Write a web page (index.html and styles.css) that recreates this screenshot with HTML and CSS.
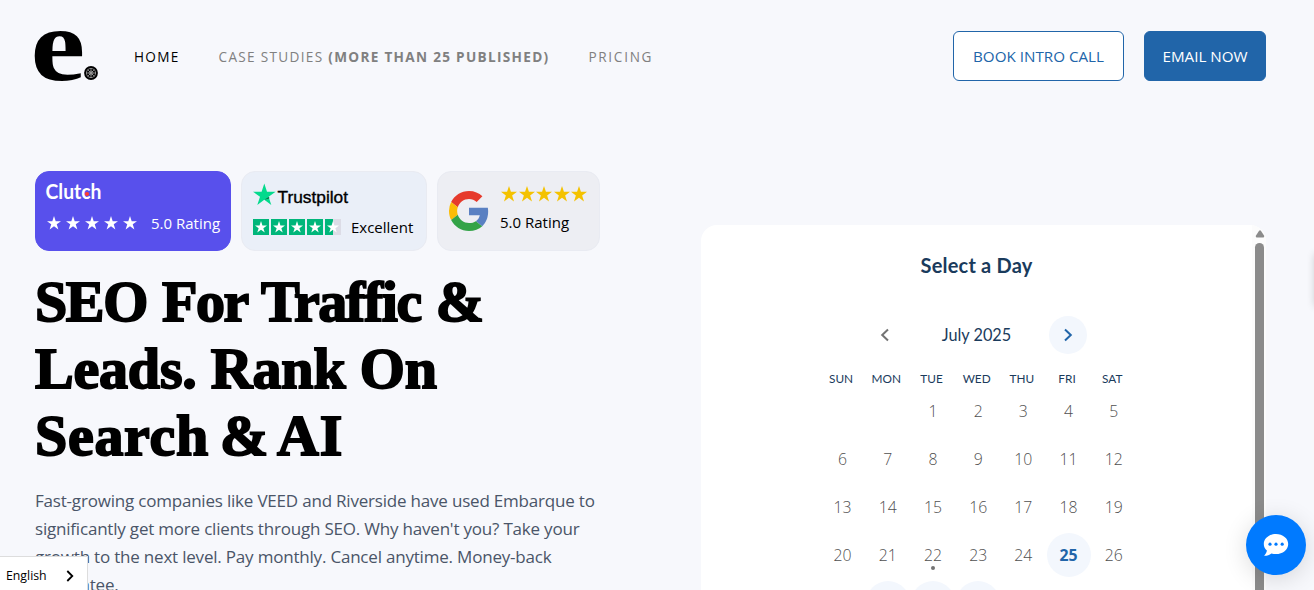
FILE: index.html
```
<!DOCTYPE html>
<html lang="en">

<head>
    <meta charset="UTF-8">
    <meta name="viewport" content="width=device-width, initial-scale=1.0">
    <title>Embarque</title>
    <link rel="stylesheet" href="styles.css">
</head>

<body>
    <!-- Shared shapes -->
    <svg class="defs" width="0" height="0">
        <symbol id="star" viewBox="0 0 24 24">
            <path d="M12 0l2.9 8.8H24l-7.3 5.5 2.8 8.9L12 17.7l-7.5 5.5 2.8-8.9L0 8.8h9.1z" />
        </symbol>
    </svg>

    <header class="header">
        <a class="logo" href="#">
            <svg width="64" height="52" viewBox="0 0 64 52">
                <text class="logo-letter" transform="translate(-4.5 50) scale(1.21 1.02)" x="0" y="0">e</text>
                <circle cx="56" cy="43" r="6.9" />
                <g class="logo-seal">
                    <circle cx="56" cy="43" r="4.6" />
                    <circle cx="56" cy="43" r="2" />
                    <path d="M56 38v10M51 43h10M52.5 39.5l7 7M59.5 39.5l-7 7" />
                </g>
            </svg>
        </a>
        <nav class="nav">
            <a class="nav-home" href="#">HOME</a>
            <a class="nav-cases" href="#">CASE STUDIES <b>(MORE THAN 25 PUBLISHED)</b></a>
            <a class="nav-pricing" href="#">PRICING</a>
        </nav>
        <a class="btn btn-outline" href="#">BOOK INTRO CALL</a>
        <a class="btn btn-solid" href="#">EMAIL NOW</a>
    </header>

    <main class="hero">
        <section class="intro">
            <div class="badges">
                <div class="badge clutch">
                    <svg width="60" height="22" viewBox="0 0 60 22">
                        <text class="clutch-name" x="-0.5" y="18" textLength="56" lengthAdjust="spacingAndGlyphs">Clutch</text>
                        <circle cx="41" cy="13" r="2.1" fill="#ff3d2e" />
                    </svg>
                    <div class="rating">
                        <div class="stars">
                            <svg><use href="#star" /></svg>
                            <svg><use href="#star" /></svg>
                            <svg><use href="#star" /></svg>
                            <svg><use href="#star" /></svg>
                            <svg><use href="#star" /></svg>
                        </div>
                        <span class="rating-text">5.0 Rating</span>
                    </div>
                </div>
                <div class="badge trustpilot">
                    <svg width="98" height="26" viewBox="0 0 98 26">
                        <path fill="#04da8d" d="M11.3.5l2.7 8.2h8.6l-7 5 2.7 8.2-7-5.1-7 5.1L7 13.7l-7-5h8.6z" />
                        <path fill="#126849" d="M16.2 15.6l-4.9 1.2 4.9-3z" />
                        <text class="trustpilot-name" x="24.5" y="20" textLength="70.5" lengthAdjust="spacingAndGlyphs">Trustpilot</text>
                    </svg>
                    <div class="rating">
                        <div class="boxes">
                            <span><svg><use href="#star" /></svg></span>
                            <span><svg><use href="#star" /></svg></span>
                            <span><svg><use href="#star" /></svg></span>
                            <span><svg><use href="#star" /></svg></span>
                            <span class="half"><svg><use href="#star" /></svg></span>
                        </div>
                        <span class="rating-text excellent">Excellent</span>
                    </div>
                </div>
                <div class="badge google">
                    <svg width="40" height="40" viewBox="0 0 48 48">
                        <path fill="#e63a2c" d="M24 9.5c3.54 0 6.71 1.22 9.21 3.6l6.85-6.85C35.9 2.38 30.47 0 24 0 14.62 0 6.51 5.38 2.56 13.22l7.98 6.19C12.43 13.72 17.74 9.5 24 9.5z" />
                        <path fill="#5a80c2" d="M46.98 24.55c0-1.57-.15-3.09-.38-4.55H24v9.02h12.94c-.58 2.96-2.26 5.48-4.78 7.18l7.73 6c4.51-4.18 7.09-10.36 7.09-17.65z" />
                        <path fill="#fbbc05" d="M10.53 28.59A14.5 14.5 0 0 1 9.77 24c0-1.6.27-3.14.76-4.59l-7.98-6.19A23.93 23.93 0 0 0 0 24c0 3.88.92 7.54 2.56 10.78z" />
                        <path fill="#33a347" d="M24 48c6.48 0 11.93-2.13 15.89-5.81l-7.73-6c-2.15 1.45-4.92 2.3-8.16 2.3-6.26 0-11.57-4.22-13.47-9.91l-7.98 6.19C6.51 42.62 14.62 48 24 48z" />
                    </svg>
                    <div class="google-rating">
                        <div class="stars">
                            <svg><use href="#star" /></svg>
                            <svg><use href="#star" /></svg>
                            <svg><use href="#star" /></svg>
                            <svg><use href="#star" /></svg>
                            <svg><use href="#star" /></svg>
                        </div>
                        <span class="rating-text">5.0 Rating</span>
                    </div>
                </div>
            </div>

            <h1>
                <span class="line line-1">SEO For Traffic &amp;</span>
                <span class="line line-2">Leads. Rank On</span>
                <span class="line line-3">Search &amp; AI</span>
            </h1>

            <p class="lead">
                Fast-growing companies like VEED and Riverside have used Embarque to<br>
                significantly get more clients through SEO. Why haven't you? Take your<br>
                growth to the next level. Pay monthly. Cancel anytime. Money-back<br>
                guarantee.
            </p>
        </section>

        <section class="calendar">
            <div class="calendar-body">
                <h2>Select a Day</h2>
                <div class="month">
                    <button class="arrow prev" aria-label="Previous month">
                        <svg width="10" height="14" viewBox="0 0 10 14"><path d="M8 1.5L2.2 7 8 12.5" /></svg>
                    </button>
                    <span class="month-name">July 2025</span>
                    <button class="arrow next" aria-label="Next month">
                        <svg width="10" height="14" viewBox="0 0 10 14"><path d="M2 1.5L7.8 7 2 12.5" /></svg>
                    </button>
                </div>
                <div class="weekdays">
                    <span>SUN</span><span>MON</span><span>TUE</span><span>WED</span><span>THU</span><span>FRI</span><span>SAT</span>
                </div>
                <div class="days">
                    <span></span><span></span><span>1</span><span>2</span><span>3</span><span>4</span><span>5</span>
                    <span>6</span><span>7</span><span>8</span><span>9</span><span>10</span><span>11</span><span>12</span>
                    <span>13</span><span>14</span><span>15</span><span>16</span><span>17</span><span>18</span><span>19</span>
                    <span>20</span><span>21</span><span class="today">22</span><span>23</span><span>24</span><span class="open">25</span><span>26</span>
                    <span></span><span class="open"></span><span class="open"></span><span class="open"></span>
                </div>
            </div>
            <div class="scrollbar">
                <svg width="10" height="8" viewBox="0 0 10 8"><path d="M4.1.8Q5-.2 5.9.8L9 5.4Q9.8 7.5 8.3 7.5H1.7Q.2 7.5 1 5.4z" /></svg>
                <div class="thumb"></div>
            </div>
        </section>
    </main>

    <div class="side-tab"></div>

    <div class="language">
        <span>English</span>
        <svg width="8" height="12" viewBox="0 0 8 12"><path d="M1.3 1L6.3 6l-5 5" /></svg>
    </div>

    <button class="chat" aria-label="Open chat">
        <svg width="26" height="24" viewBox="0 0 26 24">
            <path fill="#fff" d="M13 1C6.3 1 .8 5.4.8 11c0 2.600 1.200 4.900 3.100 6.600-.3 2-1.300 3.700-2.800 5.100 2.900.1 5.300-.8 7.300-2.300 1.500.5 3 .7 4.600.7 6.700 0 12.200-4.500 12.200-10.100S19.700 1 13 1z" />
            <g fill="#007aff">
                <circle cx="7" cy="11.200" r="1.600" />
                <circle cx="13" cy="11.200" r="1.600" />
                <circle cx="19.200" cy="11.200" r="1.600" />
            </g>
        </svg>
    </button>
</body>

</html>
```
FILE: styles.css
```
* {
    box-sizing: border-box;
}

body {
    margin: 0;
    height: 590px;
    overflow: hidden;
    background-color: #f7f8fc;
    font-family: "Open Sans", "Noto Sans", sans-serif;
    color: #000;
}

a {
    color: inherit;
    text-decoration: none;
}

button {
    border: none;
    padding: 0;
    cursor: pointer;
}

svg {
    display: block;
    overflow: visible;
}

.defs {
    position: absolute;
}

/* Header */
.header {
    display: flex;
    align-items: center;
    height: 112px;
    padding: 0 48px 0 35px;
}

.logo-letter {
    font-family: "Liberation Serif", serif;
    font-weight: bold;
    font-size: 102px;
}

.logo-seal {
    fill: none;
    stroke: #aaa;
    stroke-width: 0.7px;
}

.nav {
    display: flex;
    flex: 1;
    gap: 39px;
    margin-left: 35px;
    font-size: 13.6px;
    letter-spacing: 1.3px;
    color: #808080;
    white-space: nowrap;
}

.nav-home {
    color: #000;
}

.nav-pricing {
    letter-spacing: 1.7px;
}

.btn {
    display: flex;
    align-items: center;
    justify-content: center;
    height: 50px;
    border: 1px solid #2165a9;
    border-radius: 6px;
    font-size: 15.2px;
    white-space: nowrap;
}

.btn-outline {
    width: 171px;
    background-color: #fff;
    color: #2165a9;
}

.btn-solid {
    width: 122px;
    margin-left: 20px;
    background-color: #2165a9;
    color: #fff;
}

/* Hero */
.hero {
    display: flex;
    justify-content: space-between;
    height: 478px;
    padding: 59px 48px 0 35px;
}

.intro {
    width: 600px;
}

.badges {
    display: flex;
    gap: 10px;
}

.badge {
    height: 80px;
    border: 1px solid #e9ebf2;
    border-radius: 14px;
}

.rating {
    display: flex;
    align-items: center;
}

.rating-text {
    font-size: 15px;
    line-height: 22px;
    white-space: nowrap;
}

.stars {
    display: flex;
}

.clutch {
    width: 196px;
    padding: 9px 0 0 10px;
    background-color: #5850ec;
    border-color: #5850ec;
    color: #fff;
}

.clutch-name {
    font-family: Lato, sans-serif;
    font-weight: bold;
    font-size: 21px;
    fill: #fff;
}

.clutch .rating {
    margin-top: 9px;
}

.clutch .stars {
    gap: 5px;
    margin: 0 14.5px 0 0.5px;
    fill: #fff;
}

.clutch .stars svg {
    width: 14px;
    height: 14px;
}

.trustpilot {
    width: 186px;
    padding: 11px 0 0 11px;
    background-color: #eaeff8;
}

.trustpilot-name {
    font-family: "Liberation Sans", sans-serif;
    font-size: 16.5px;
    stroke: #000;
    stroke-width: 0.35px;
}

.trustpilot .rating {
    margin-top: 7px;
}

.boxes {
    display: flex;
    gap: 2px;
    margin-right: 10px;
}

.boxes span {
    display: flex;
    align-items: center;
    justify-content: center;
    width: 16px;
    height: 16px;
    background-color: #00b67a;
}

.boxes svg {
    width: 12px;
    height: 12px;
    fill: #fff;
}

.boxes .half {
    background: linear-gradient(to right, #00b67a 50%, #dcdce6 50%);
}

.google {
    display: flex;
    width: 163px;
    padding: 14px 0 0 11px;
    background-color: #edeef3;
}

.google > svg {
    margin-top: 5px;
}

.google-rating {
    margin-left: 11px;
}

.google .stars {
    gap: 1.5px;
    margin: 0 0 9px 1px;
    fill: #f4c200;
}

.google .stars svg {
    width: 16px;
    height: 16px;
}

h1 {
    margin: 17px 0 0;
    font-family: "Liberation Serif", serif;
    font-weight: bold;
    font-size: 58px;
    line-height: 67px;
}

.line {
    display: block;
    white-space: nowrap;
    -webkit-text-stroke: 1.9px #000;
}

.line-1 {
    letter-spacing: -1.4px;
    word-spacing: 2px;
}

.line-2 {
    letter-spacing: -0.2px;
}

.line-3 {
    letter-spacing: 0.7px;
    word-spacing: -4px;
}

.lead {
    margin: 18px 0 0;
    font-size: 17px;
    line-height: 28px;
    letter-spacing: -0.2px;
    color: #4a5568;
    white-space: nowrap;
}

/* Calendar */
.calendar {
    display: flex;
    width: 565px;
    height: 365px;
    margin-top: 54px;
    border-radius: 16px 16px 0 0;
    overflow: hidden;
    background-color: #fff;
    font-family: Lato, sans-serif;
    color: #1a3b5c;
}

.calendar-body {
    flex: 1;
}

.calendar h2 {
    margin: 27px 0 0;
    font-size: 20px;
    line-height: 26px;
    letter-spacing: 0.2px;
    text-align: center;
}

.month {
    display: flex;
    align-items: center;
    justify-content: space-between;
    width: 221px;
    margin: 38px auto 0;
}

.arrow {
    display: flex;
    align-items: center;
    justify-content: center;
    width: 38px;
    height: 38px;
    border-radius: 50%;
    background: none;
    fill: none;
    stroke: #737373;
    stroke-width: 2px;
}

.next {
    background-color: #f3f7fd;
    stroke: #2165a9;
}

.month-name {
    padding-bottom: 1px;
    font-size: 16.3px;
}

.weekdays,
.days {
    display: grid;
    grid-template-columns: repeat(7, 45.2px);
    justify-items: center;
    width: 316.4px;
}

.weekdays {
    margin: 17px 0 0 117.5px;
    font-size: 11.8px;
    line-height: 16px;
}

.days {
    grid-auto-rows: 48px;
    align-items: center;
    margin: 0 0 0 119px;
    font-family: "Open Sans", sans-serif;
    font-weight: 300;
    font-size: 15.8px;
    color: #505050;
}

.days span {
    display: flex;
    align-items: center;
    justify-content: center;
    position: relative;
    width: 44px;
    height: 44px;
    border-radius: 50%;
}

.days .open {
    background-color: #f3f7fd;
    font-weight: bold;
    color: #2165a9;
}

.today::after {
    content: "";
    position: absolute;
    left: 20px;
    top: 33px;
    width: 4px;
    height: 4px;
    border-radius: 50%;
    background-color: #737373;
}

.scrollbar {
    width: 14px;
    padding: 5px 0 0 3px;
    background-color: #fcfcfc;
    fill: #8b8b8b;
}

.scrollbar svg {
    margin-left: -0.5px;
}

.thumb {
    width: 9px;
    height: 400px;
    margin-top: 5px;
    border-radius: 5px;
    background-color: #8b8b8b;
}

/* Floating widgets */
.side-tab {
    position: absolute;
    right: -11px;
    top: 254px;
    width: 10px;
    height: 52px;
    box-shadow: 0 0 8px rgba(0, 0, 0, 0.2);
}

.language {
    position: absolute;
    left: -1px;
    bottom: 0;
    display: flex;
    align-items: center;
    justify-content: space-between;
    width: 89px;
    height: 34px;
    padding: 4px 13px 0 6px;
    border: 1px solid #ddd;
    border-bottom: none;
    background-color: #fff;
    font-size: 12.3px;
}

.language svg {
    fill: none;
    stroke: #000;
    stroke-width: 1.8px;
}

.chat {
    position: absolute;
    left: 1246px;
    top: 515px;
    display: flex;
    align-items: center;
    justify-content: center;
    width: 60px;
    height: 60px;
    border-radius: 50%;
    background-color: #007aff;
    box-shadow: 0 4px 24px rgba(0, 0, 0, 0.14);
}
```
